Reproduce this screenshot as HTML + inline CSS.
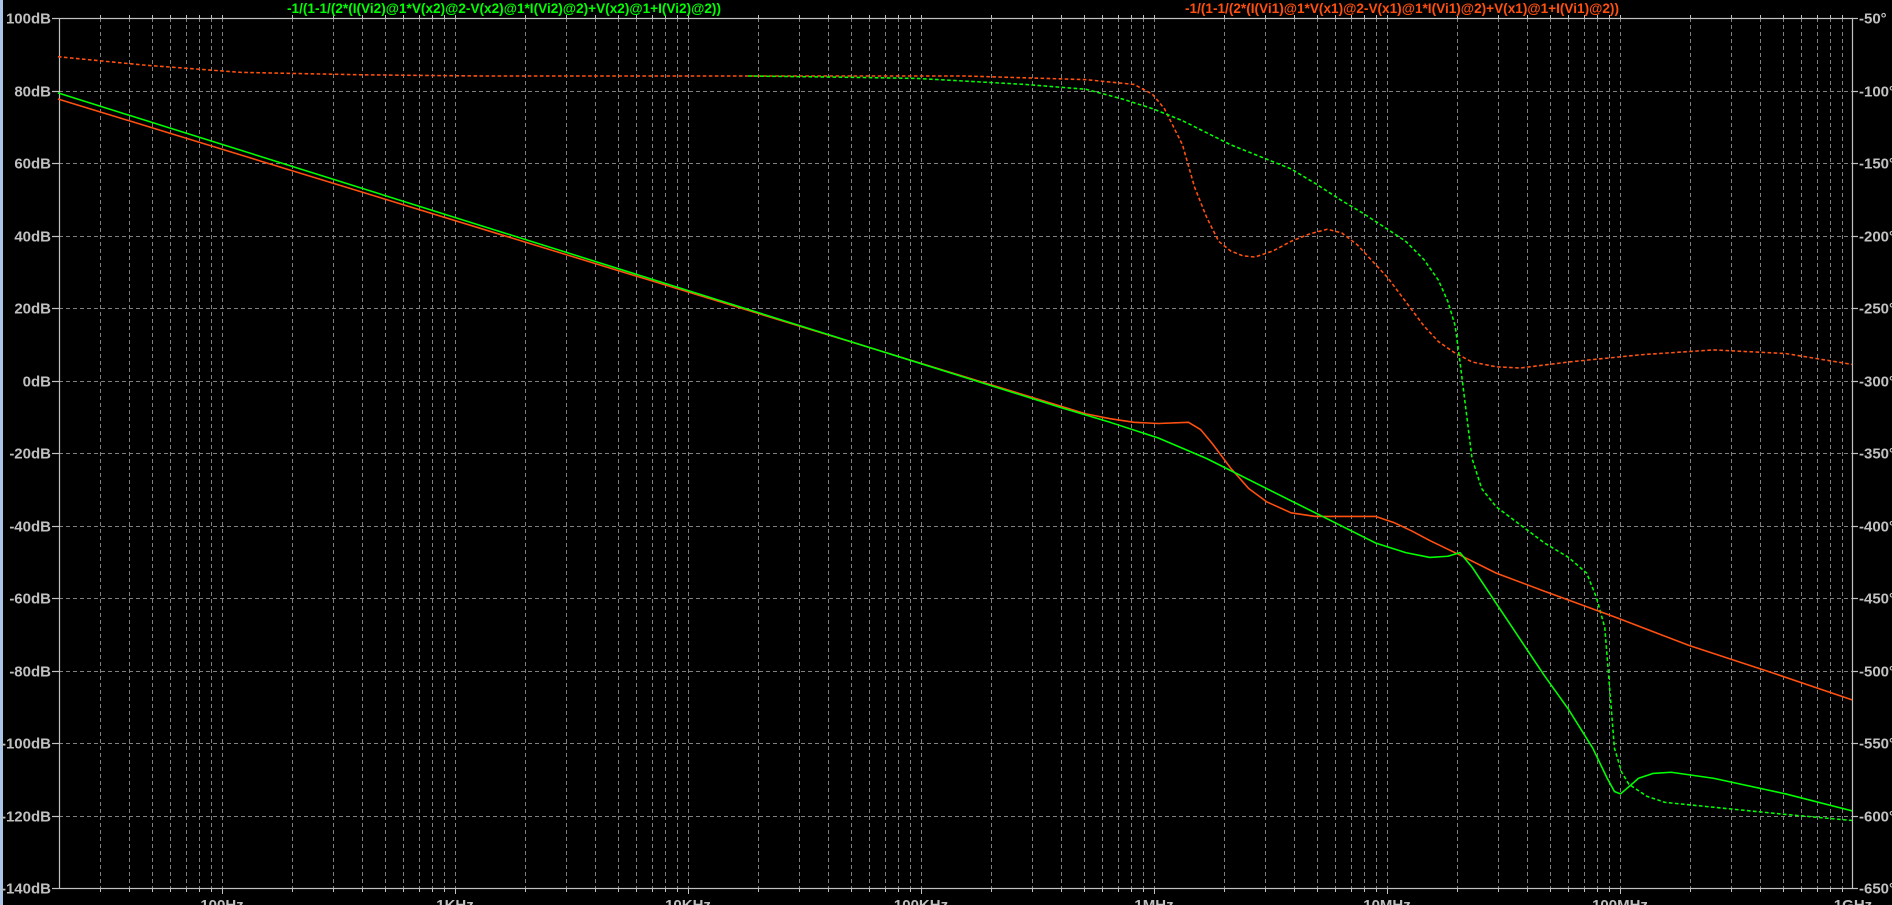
<!DOCTYPE html>
<html><head><meta charset="utf-8"><style>
html,body{margin:0;padding:0;background:#000;width:1892px;height:905px;overflow:hidden}
svg{display:block}
text{font-family:"Liberation Sans",sans-serif;font-weight:bold}
</style></head><body>
<svg id="s" width="1892" height="905" xmlns="http://www.w3.org/2000/svg">
<rect x="0" y="0" width="1892" height="905" fill="#000"/>
<rect x="0" y="0" width="3" height="905" fill="#a9c4e4"/>
<g id="grid" stroke="#808080" stroke-width="1" stroke-dasharray="4,3" fill="none"></g>
<g id="axes" stroke="#c0c0c0" stroke-width="1.2" fill="none"></g>
<g id="labels" fill="#c0c0c0" font-size="15"></g>
<text x="287" y="13" fill="#00ff00" font-size="14" font-weight="normal" textLength="434" lengthAdjust="spacingAndGlyphs">-1/(1-1/(2*(I(Vi2)@1*V(x2)@2-V(x2)@1*I(Vi2)@2)+V(x2)@1+I(Vi2)@2))</text>
<text x="1185" y="13" fill="#ff5010" font-size="14" font-weight="normal" textLength="434" lengthAdjust="spacingAndGlyphs">-1/(1-1/(2*(I(Vi1)@1*V(x1)@2-V(x1)@1*I(Vi1)@2)+V(x1)@1+I(Vi1)@2))</text>
<g transform="scale(1.2066)" fill="none" stroke-width="1.3" stroke-linejoin="round">
<polyline stroke="#ff5010" stroke-dasharray="3,2" points="48,47 120,54 200,60 300,62 400,63 600,63 800,63 900,66 940,70 955,78 965,90 980,120 990,155 1000,180 1010,200 1020,208 1030,212 1040,213 1055,208 1070,200 1085,194 1100,190 1112,193 1125,203 1150,230 1165,250 1180,270 1192,283 1205,292 1220,300 1240,304 1260,305 1300,300 1360,294 1420,290 1480,293 1535,302"/>
<polyline stroke="#00ff00" stroke-dasharray="3,2" points="620,63 700,64 760,65 850,70 900,74 930,82 955,90 980,100 1000,110 1020,120 1045,130 1070,140 1090,152 1110,165 1130,177 1150,190 1165,200 1180,215 1192,232 1200,250 1206,270 1210,300 1215,340 1220,380 1228,405 1240,420 1260,435 1280,450 1300,462 1315,475 1323,495 1330,520 1334,570 1338,620 1344,640 1350,650 1365,660 1380,665 1430,670 1480,675 1535,680"/>
<polyline stroke="#ff5010" points="48,82 900,343 920,347 940,350 960,351 985,350 995,356 1005,368 1020,388 1035,405 1050,416 1070,425 1090,428 1110,428 1140,428 1155,433 1170,440 1185,448 1210,460 1240,475 1280,490 1340,512 1400,535 1470,558 1535,580"/>
<polyline stroke="#00ff00" points="48,77 880,338 920,350 960,363 1000,380 1050,405 1100,430 1140,450 1165,458 1185,462 1200,461 1210,458 1220,470 1240,500 1260,530 1280,560 1300,588 1320,620 1332,645 1338,656 1343,658 1350,652 1358,645 1370,641 1385,640 1420,645 1480,658 1535,672"/>
</g>
</svg>
<script>
var NS="http://www.w3.org/2000/svg";
function el(p,t,a,txt){var e=document.createElementNS(NS,t);for(var k in a)e.setAttribute(k,a[k]);if(txt!==undefined)e.textContent=txt;document.getElementById(p).appendChild(e);return e;}
var L=59,R=1852,T=18,B=888;
function X(f){return 222+233*Math.log10(f/100);}
// vertical grid
for(var d=1;d<=9;d++){for(var m=1;m<=9;m++){var f=Math.pow(10,d)*m;var x=X(f);if(x<=L+1||x>=R-1)continue;x=Math.round(x)+0.5;
el("grid","line",{x1:x,y1:T,x2:x,y2:B});el("axes","line",{x1:x,y1:B,x2:x,y2:B+(m==1?6:4),"stroke-width":1});el("axes","line",{x1:x,y1:T,x2:x,y2:T-3,"stroke-width":1});}}
// horizontal
for(var i=0;i<=12;i++){var y=Math.round(T+i*72.5)+0.5;
if(i>0&&i<12)el("grid","line",{x1:L,y1:y,x2:R,y2:y});
el("axes","line",{x1:L-7,y1:y,x2:L,y2:y});el("axes","line",{x1:R,y1:y,x2:R+6,y2:y});
var db=100-20*i;el("labels","text",{x:51,y:y+5,"text-anchor":"end"},db+"dB");
var ph=-50-50*i;el("labels","text",{x:1859,y:y+5},ph+"\u00b0");}
el("axes","rect",{x:L+0.5,y:T+0.5,width:R-L,height:B-T});
var fl=["100Hz","1KHz","10KHz","100KHz","1MHz","10MHz","100MHz","1GHz"];
for(var k=0;k<8;k++){el("labels","text",{x:X(100*Math.pow(10,k)),y:910,"text-anchor":"middle"},fl[k]);}
</script>
</body></html>
